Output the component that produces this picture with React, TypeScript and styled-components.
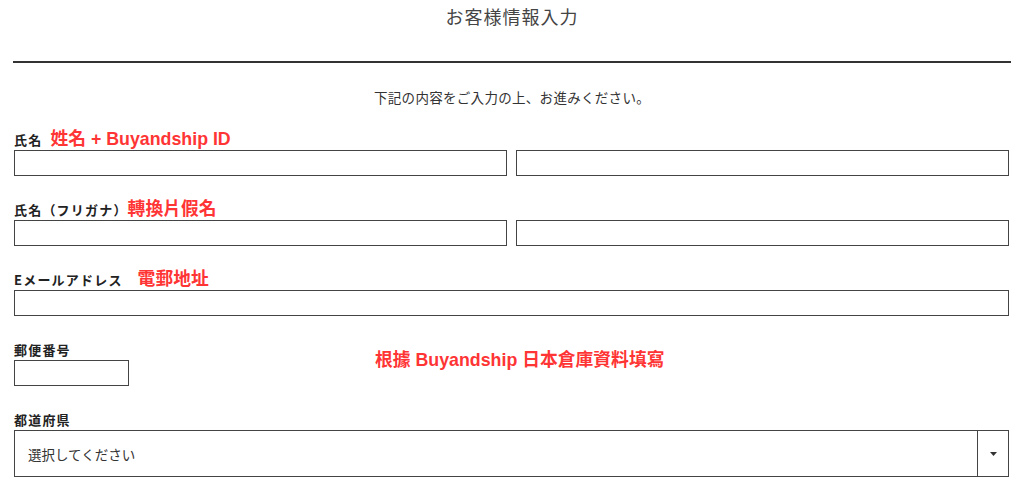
import React from "react";
import styled, { createGlobalStyle } from "styled-components";

const GlobalStyle = createGlobalStyle`
  html, body { margin: 0; padding: 0; background: #fff; }
  body {
    font-family: "Liberation Serif", "Noto Sans CJK JP", serif;
    color: #333;
  }
`;

const Page = styled.div`
  width: 1024px;
`;

const Header = styled.header`
  margin: 0 13px;
  padding-bottom: 29px;
  border-bottom: 2px solid #333;
  text-align: center;
`;

const Title = styled.h1`
  margin: 0;
  font-family: "Noto Sans CJK JP", sans-serif;
  font-weight: 400;
  font-size: 18px;
  line-height: 32px;
  letter-spacing: 1px;
  color: #444;
`;

const Lead = styled.p`
  margin: 24px 0 21px;
  text-align: center;
  font-family: "Noto Sans CJK JP", sans-serif;
  font-size: 13.5px;
  line-height: 20px;
  letter-spacing: 0.3px;
  color: #333;
`;

const Form = styled.form`
  display: flex;
  flex-direction: column;
  gap: 22px;
  padding: 0 15px 0 14px;
`;

const Field = styled.div`
  display: flex;
  flex-direction: column;
`;

const LabelRow = styled.div`
  display: flex;
  align-items: center;
  height: 22px;
`;

const Label = styled.label`
  font-family: "Noto Sans CJK JP", sans-serif;
  font-weight: 700;
  font-size: 13px;
  letter-spacing: 1.2px;
  color: #222;
`;

const Note = styled.span<{ $gap?: number }>`
  margin-left: ${(p) => p.$gap ?? 8}px;
  font-family: "Liberation Sans", "Noto Sans CJK TC", sans-serif;
  font-weight: 700;
  font-size: 17.8px;
  line-height: 20px;
  color: #ff3535;
`;

const Pair = styled.div`
  display: grid;
  grid-template-columns: 1fr 1fr;
  gap: 9px;
`;

const Input = styled.input<{ $width?: number }>`
  box-sizing: border-box;
  width: ${(p) => (p.$width ? `${p.$width}px` : "100%")};
  height: 26px;
  margin: 0;
  padding: 0 6px;
  border: 1px solid #444;
  border-radius: 0;
  background: #fff;
  outline: none;
`;

const PostalRow = styled.div`
  display: flex;
  align-items: flex-start;
`;

const PostalNote = styled.span`
  margin: 12px 0 0 246px;
  font-family: "Liberation Sans", "Noto Sans CJK TC", sans-serif;
  font-weight: 700;
  font-size: 17.8px;
  line-height: 20px;
  color: #ff3535;
`;

const Select = styled.div`
  box-sizing: border-box;
  display: flex;
  height: 47px;
  border: 1px solid #444;
  background: #fff;
`;

const SelectValue = styled.div`
  flex: 1;
  display: flex;
  align-items: center;
  padding-left: 13px;
  font-family: "Noto Sans CJK JP", sans-serif;
  font-size: 13.5px;
  color: #333;
`;

const SelectArrow = styled.div`
  width: 30px;
  display: flex;
  align-items: center;
  justify-content: center;
  border-left: 1px solid #444;
`;

export default function App() {
  return (
    <Page>
      <GlobalStyle />
      <Header>
        <Title>お客様情報入力</Title>
      </Header>
      <Lead>下記の内容をご入力の上、お進みください。</Lead>
      <Form>
        <Field>
          <LabelRow>
            <Label>氏名</Label>
            <Note $gap={8}>姓名 + Buyandship ID</Note>
          </LabelRow>
          <Pair>
            <Input />
            <Input />
          </Pair>
        </Field>
        <Field>
          <LabelRow>
            <Label>氏名（フリガナ）</Label>
            <Note $gap={0}>轉換片假名</Note>
          </LabelRow>
          <Pair>
            <Input />
            <Input />
          </Pair>
        </Field>
        <Field>
          <LabelRow>
            <Label>Eメールアドレス</Label>
            <Note $gap={15}>電郵地址</Note>
          </LabelRow>
          <Input />
        </Field>
        <PostalRow>
          <Field>
            <LabelRow>
              <Label>郵便番号</Label>
            </LabelRow>
            <Input $width={115} />
          </Field>
          <PostalNote>根據 Buyandship 日本倉庫資料填寫</PostalNote>
        </PostalRow>
        <Field>
          <LabelRow>
            <Label>都道府県</Label>
          </LabelRow>
          <Select>
            <SelectValue>選択してください</SelectValue>
            <SelectArrow>
              <svg width="7" height="4" viewBox="0 0 7 4">
                <path d="M0 0h7L3.5 4z" fill="#333" />
              </svg>
            </SelectArrow>
          </Select>
        </Field>
      </Form>
    </Page>
  );
}
